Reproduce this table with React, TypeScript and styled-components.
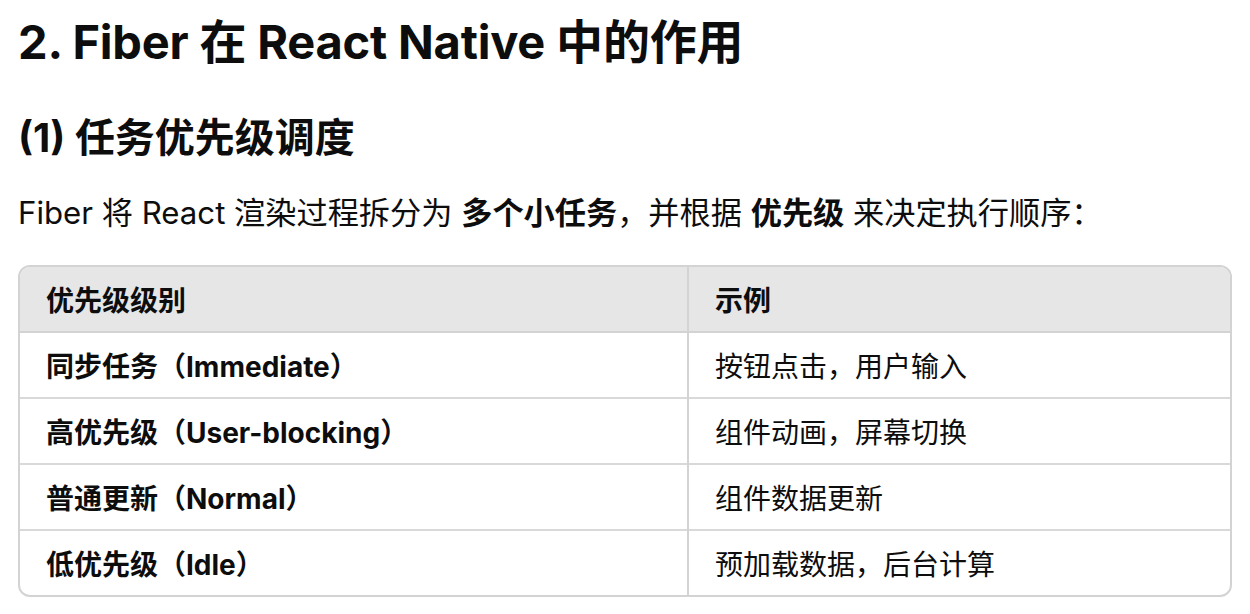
import React from "react";
import styled, { createGlobalStyle } from "styled-components";

const Global = createGlobalStyle`
  html, body { margin: 0; padding: 0; background: #ffffff; }
  body {
    font-family: Inter, "Noto Sans CJK SC", sans-serif;
    color: #0d0d0d;
  }
`;

const Page = styled.div`
  padding: 0 18px;
  display: flex;
  flex-direction: column;
`;

const H2 = styled.h2`
  margin: 14px 0 0;
  font-size: 47px;
  line-height: 56px;
  font-weight: 700;
  letter-spacing: -0.2px;
`;

const H3 = styled.h3`
  margin: 43px 0 0;
  font-size: 40px;
  line-height: 50px;
  font-weight: 700;
`;

const P = styled.p`
  margin: 28px 0 0;
  font-size: 31.2px;
  line-height: 44px;
  font-weight: 400;
`;

const Strong = styled.strong`
  font-weight: 700;
`;

const TableWrap = styled.div`
  margin-top: 30px;
  border: 2px solid #d3d3d3;
  border-radius: 12px;
  overflow: hidden;
  width: 1214px;
  box-sizing: border-box;
`;

const Table = styled.table`
  width: 100%;
  border-collapse: collapse;
  table-layout: fixed;
`;

const Th = styled.th`
  background: #e6e6e6;
  text-align: left;
  font-size: 28px;
  font-weight: 700;
  height: 64px;
  padding: 0 26px;
  border-bottom: 2px solid #d3d3d3;
  & + & { border-left: 2px solid #d3d3d3; }
`;

const Td = styled.td<{ $bold?: boolean }>`
  font-size: 28px;
  font-weight: ${(p) => (p.$bold ? 700 : 400)};
  height: 64px;
  padding: 0 26px;
  border-top: 2px solid #d9d9d9;
  & + & { border-left: 2px solid #d3d3d3; }
`;

const Row = styled.tr`
  &:first-child td { border-top: none; }
`;

const rows: [string, string][] = [
  ["同步任务（Immediate）", "按钮点击，用户输入"],
  ["高优先级（User-blocking）", "组件动画，屏幕切换"],
  ["普通更新（Normal）", "组件数据更新"],
  ["低优先级（Idle）", "预加载数据，后台计算"],
];

export default function App() {
  return (
    <Page>
      <Global />
      <H2>2. Fiber 在 React Native 中的作用</H2>
      <H3>(1) 任务优先级调度</H3>
      <P>
        Fiber 将 React 渲染过程拆分为 <Strong>多个小任务</Strong>，并根据 <Strong>优先级</Strong> 来决定执行顺序：
      </P>
      <TableWrap>
        <Table>
          <colgroup>
            <col style={{ width: "668px" }} />
            <col />
          </colgroup>
          <thead>
            <tr>
              <Th>优先级级别</Th>
              <Th>示例</Th>
            </tr>
          </thead>
          <tbody>
            {rows.map(([a, b]) => (
              <Row key={a}>
                <Td $bold>{a}</Td>
                <Td>{b}</Td>
              </Row>
            ))}
          </tbody>
        </Table>
      </TableWrap>
    </Page>
  );
}
